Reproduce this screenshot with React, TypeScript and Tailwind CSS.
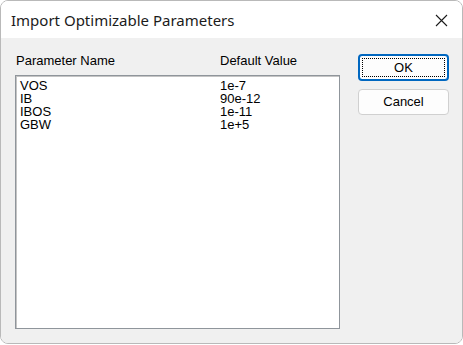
const rows = [
  ["VOS", "1e-7"],
  ["IB", "90e-12"],
  ["IBOS", "1e-11"],
  ["GBW", "1e+5"],
];

export default function App() {
  return (
    <div className="w-[463px] h-[345px] bg-white">
      <div className="w-[463px] h-[344px] rounded-[8px] border border-[#b9b9b9] overflow-hidden flex flex-col">
        {/* Title bar */}
        <div className="h-[37px] bg-white flex items-center justify-between pl-[10px] pr-[14px]">
          <span className="text-[15px] text-[#1b1b1b] font-['Segoe_UI','Noto_Sans',sans-serif] pt-[1px]">
            Import Optimizable Parameters
          </span>
          <svg width="13" height="13" viewBox="0 0 13 13" className="mt-[1px]">
            <path d="M1 1L12 12M12 1L1 12" stroke="#1b1b1b" strokeWidth="1.1" />
          </svg>
        </div>

        {/* Body */}
        <div className="flex-1 bg-[#f0f0f0] flex pl-[14px] pr-[13px] font-['Liberation_Sans',Arial,sans-serif] text-[13px] text-black">
          <div className="w-[325px] pt-[15px]">
            <div className="flex h-[16px] leading-[16px] pl-[1px]">
              <span className="w-[204px]">Parameter Name</span>
              <span>Default Value</span>
            </div>
            <div className="mt-[6px] h-[254px] bg-white border border-[#8f959b] shadow-[inset_1px_1px_0_#c4c4c4] pt-[3px] pl-[4px]">
              {rows.map(([name, value]) => (
                <div key={name} className="flex h-[13px] leading-[13px]">
                  <span className="w-[200px]">{name}</span>
                  <span>{value}</span>
                </div>
              ))}
            </div>
          </div>

          <div className="ml-auto pt-[16px] flex flex-col gap-[8px]">
            <button className="w-[91px] h-[27px] rounded-[4px] border-2 border-[#0067c0] bg-[#fdfdfd] p-[2px]">
              <div className="w-full h-full border border-dotted border-black flex items-center justify-center leading-none">
                OK
              </div>
            </button>
            <button className="w-[91px] h-[26px] rounded-[4px] border border-[#d0d0d0] bg-[#fdfdfd] flex items-center justify-center">
              Cancel
            </button>
          </div>
        </div>
      </div>
    </div>
  );
}
